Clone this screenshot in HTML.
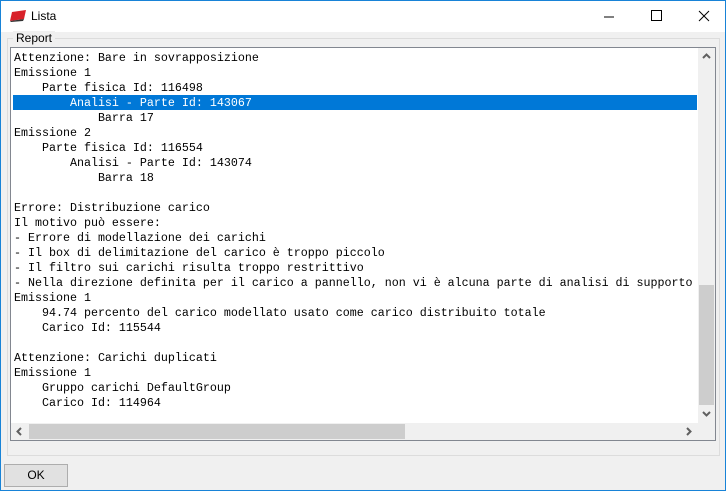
<!DOCTYPE html><html><head><style>
body{margin:0;width:726px;height:491px;overflow:hidden;background:#f0f0f0;font-family:"Liberation Sans",sans-serif;position:relative}
.win{position:absolute;left:0;top:0;width:724px;height:489px;border:1px solid #1883d7;background:#f0f0f0}
.title{position:absolute;left:0;top:0;width:724px;height:31px;background:#fff}
.title span{position:absolute;left:30px;top:8px;font-size:12px}
.grp{position:absolute;left:6px;top:37px;width:711px;height:416px;border:1px solid #dcdcdc}
.lbl{position:absolute;left:12px;top:30px;background:#f0f0f0;padding:0 3px;font-size:12px}
.txt{position:absolute;left:9px;top:46px;width:704px;height:392px;border:1px solid #828790;background:#fff;overflow:hidden}
pre{margin:0;position:absolute;left:3px;top:3px;font-family:"Liberation Mono",monospace;font-size:11.67px;line-height:15px}
.hl{position:absolute;left:2px;top:47px;width:684px;height:15px;background:#0078d7}
.vs{position:absolute;left:687px;top:0;width:17px;height:375px;background:#f0f0f0}
.hs{position:absolute;left:0;top:375px;width:704px;height:17px;background:#f0f0f0}
.ok{position:absolute;left:3px;top:463px;width:62px;height:21px;border:1px solid #adadad;background:#e1e1e1;font-size:12px;text-align:center;line-height:21px}
</style></head><body><div class="win">
<div class="title"><svg style="position:absolute;left:8px;top:9px" width="18" height="13"><polygon points="3,2 17,0 15,9 1,11" fill="#d8212a"/><polygon points="1,11 15,9 14,11 2,12" fill="#333"/></svg><span>Lista</span>
<svg style="position:absolute;left:602px;top:10px" width="12" height="12"><line x1="1" y1="6" x2="11" y2="6" stroke="#000"/></svg>
<svg style="position:absolute;left:650px;top:9px" width="12" height="12"><rect x="0.5" y="0.5" width="10" height="10" fill="none" stroke="#000"/></svg>
<svg style="position:absolute;left:697px;top:9px" width="12" height="12"><path d="M1 1L11 11M11 1L1 11" stroke="#000"/></svg></div>
<div class="grp"></div><div class="lbl">Report</div>
<div class="txt"><div class="hl"></div><pre>Attenzione: Bare in sovrapposizione
Emissione 1
    Parte fisica Id: 116498
<span style="color:#fff">        Analisi - Parte Id: 143067</span>
            Barra 17
Emissione 2
    Parte fisica Id: 116554
        Analisi - Parte Id: 143074
            Barra 18

Errore: Distribuzione carico
Il motivo può essere:
- Errore di modellazione dei carichi
- Il box di delimitazione del carico è troppo piccolo
- Il filtro sui carichi risulta troppo restrittivo
- Nella direzione definita per il carico a pannello, non vi è alcuna parte di analisi di supporto
Emissione 1
    94.74 percento del carico modellato usato come carico distribuito totale
    Carico Id: 115544

Attenzione: Carichi duplicati
Emissione 1
    Gruppo carichi DefaultGroup
    Carico Id: 114964</pre>
<div class="vs"><div style="position:absolute;left:1px;top:237px;width:15px;height:120px;background:#cdcdcd"></div>
<svg style="position:absolute;left:4px;top:5px" width="9" height="6"><path d="M1 5L4.5 1.5L8 5" stroke="#606060" stroke-width="2" fill="none"/></svg>
<svg style="position:absolute;left:4px;top:363px" width="9" height="6"><path d="M1 1L4.5 4.5L8 1" stroke="#606060" stroke-width="2" fill="none"/></svg></div>
<div class="hs"><div style="position:absolute;left:18px;top:1px;width:376px;height:15px;background:#cdcdcd"></div>
<svg style="position:absolute;left:5px;top:4px" width="6" height="9"><path d="M5 1L1.5 4.5L5 8" stroke="#606060" stroke-width="2" fill="none"/></svg>
<svg style="position:absolute;left:675px;top:4px" width="6" height="9"><path d="M1 1L4.5 4.5L1 8" stroke="#606060" stroke-width="2" fill="none"/></svg></div>
</div>
<div class="ok">OK</div>
</div></body></html>
